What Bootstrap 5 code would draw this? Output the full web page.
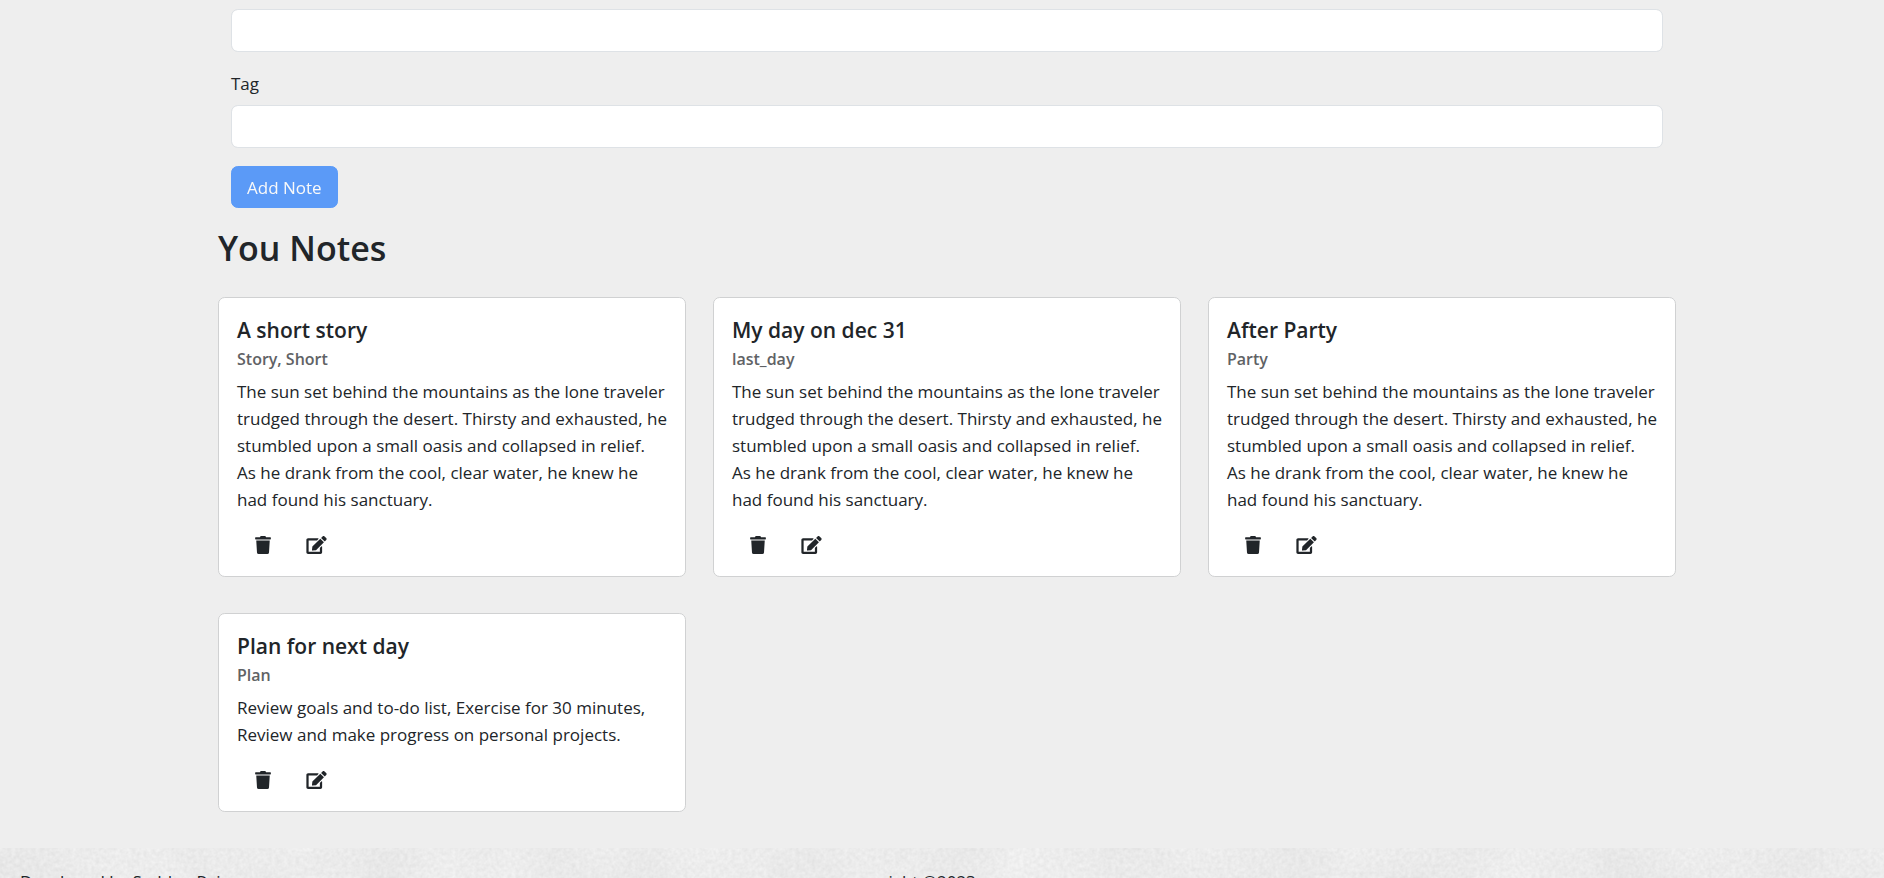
<!DOCTYPE html>
<html lang="en">
<head>
<meta charset="utf-8">
<meta name="viewport" content="width=device-width, initial-scale=1">
<title>Notes</title>
<link href="https://cdn.jsdelivr.net/npm/bootstrap@5.3.0/dist/css/bootstrap.min.css" rel="stylesheet">
<style>
  html { font-size: 18px; }
  body { font-family: "Open Sans", "Noto Sans", sans-serif; font-size: 17px; line-height: 27px; background: #eee; overflow-x: hidden; }
  .page-main { padding-left: 10px; }
  .page-width { max-width: 1485px; }
  .note-form { padding: 9px 13px 18px; }
  .form-control { height: 43px; }
  .form-label { margin-bottom: 8px; }
  .btn-add { height: 42px; font-size: 17px; line-height: 27px; padding: 6px 15px; }
  .notes-heading { font-size: 34px; line-height: 45px; font-weight: 600; margin-bottom: 8px; }
  .note-title { font-size: 21px; line-height: 28px; font-weight: 600; margin-bottom: 4px; }
  .note-tag { font-size: 16px; line-height: 22px; font-weight: 600; color: #5f6265; margin-bottom: 8px; }
  .note-card { border-color: #d0d1d2; }
  .note-actions { gap: 35px; padding-left: 18px; height: 27px; }
  .icon-btn { color: #212529; background: none; border: 0; padding: 0; line-height: 1; }
  .icon-btn svg { height: 18px; display: block; fill: currentColor; }
  .site-footer { background: #ebebeb; isolation: isolate; overflow: hidden; }
  .footer-paper { z-index: -1; }
  .footer-grid { display: grid; grid-template-columns: 1fr auto 1fr; padding: 20px 84px 20px 20px; }
</style>
</head>
<body>
<svg width="0" height="0" class="position-absolute" aria-hidden="true">
  <symbol id="i-trash" viewBox="0 0 448 512"><path d="M432 32H312l-9.4-18.7A24 24 0 0 0 281.1 0H166.800a23.720 23.720 0 0 0-21.400 13.300L136 32H16A16 16 0 0 0 0 48v32a16 16 0 0 0 16 16h416a16 16 0 0 0 16-16V48a16 16 0 0 0-16-16zM32 128l21.200 339a48 48 0 0 0 47.900 45h245.800a48 48 0 0 0 47.900-45L416 128z"/></symbol>
  <symbol id="i-edit" viewBox="0 0 576 512"><path d="M402.600 83.200l90.200 90.200c3.800 3.800 3.800 10 0 13.800L274.400 405.600l-92.800 10.300c-12.400 1.400-22.900-9.100-21.500-21.500l10.300-92.800L388.800 83.200c3.800-3.800 10-3.800 13.800 0zm162-22.900l-48.800-48.800c-15.200-15.200-39.900-15.200-55.200 0l-35.400 35.400c-3.800 3.800-3.800 10 0 13.800l90.200 90.200c3.800 3.800 10 3.800 13.800 0l35.400-35.400c15.200-15.300 15.200-40 0-55.200zM384 346.200V448H64V128h229.800c3.200 0 6.200-1.300 8.500-3.500l40-40c7.600-7.600 2.200-20.500-8.500-20.500H48C21.500 64 0 85.500 0 112v352c0 26.500 21.500 48 48 48h352c26.500 0 48-21.500 48-48V306.200c0-10.700-12.900-16-20.500-8.500l-40 40c-2.200 2.300-3.500 5.300-3.500 8.500z"/></symbol>
</svg>

<main class="page-main">
  <div class="container page-width">
    <form class="note-form">
      <div class="mb-3">
        <input type="text" class="form-control" id="description" aria-label="Description">
      </div>
      <div class="mb-3">
        <label for="tag" class="form-label d-block">Tag</label>
        <input type="text" class="form-control" id="tag">
      </div>
      <button type="submit" class="btn btn-primary btn-add" disabled>Add Note</button>
    </form>

    <h2 class="notes-heading">You Notes</h2>
    <div class="row align-items-start">
      <div class="col-md-4">
        <div class="card note-card my-3">
          <div class="card-body">
            <h5 class="note-title">A short story</h5>
            <h6 class="note-tag">Story, Short</h6>
            <p class="mb-3">The sun set behind the mountains as the lone traveler trudged through the desert. Thirsty and exhausted, he stumbled upon a small oasis and collapsed in relief. As he drank from the cool, clear water, he knew he had found his sanctuary.</p>
            <div class="note-actions d-flex align-items-center">
              <button type="button" class="icon-btn" aria-label="Delete note"><svg width="16"><use href="#i-trash"/></svg></button>
              <button type="button" class="icon-btn" aria-label="Edit note"><svg width="21"><use href="#i-edit"/></svg></button>
            </div>
          </div>
        </div>
      </div>
      <div class="col-md-4">
        <div class="card note-card my-3">
          <div class="card-body">
            <h5 class="note-title">My day on dec 31</h5>
            <h6 class="note-tag">last_day</h6>
            <p class="mb-3">The sun set behind the mountains as the lone traveler trudged through the desert. Thirsty and exhausted, he stumbled upon a small oasis and collapsed in relief. As he drank from the cool, clear water, he knew he had found his sanctuary.</p>
            <div class="note-actions d-flex align-items-center">
              <button type="button" class="icon-btn" aria-label="Delete note"><svg width="16"><use href="#i-trash"/></svg></button>
              <button type="button" class="icon-btn" aria-label="Edit note"><svg width="21"><use href="#i-edit"/></svg></button>
            </div>
          </div>
        </div>
      </div>
      <div class="col-md-4">
        <div class="card note-card my-3">
          <div class="card-body">
            <h5 class="note-title">After Party</h5>
            <h6 class="note-tag">Party</h6>
            <p class="mb-3">The sun set behind the mountains as the lone traveler trudged through the desert. Thirsty and exhausted, he stumbled upon a small oasis and collapsed in relief. As he drank from the cool, clear water, he knew he had found his sanctuary.</p>
            <div class="note-actions d-flex align-items-center">
              <button type="button" class="icon-btn" aria-label="Delete note"><svg width="16"><use href="#i-trash"/></svg></button>
              <button type="button" class="icon-btn" aria-label="Edit note"><svg width="21"><use href="#i-edit"/></svg></button>
            </div>
          </div>
        </div>
      </div>
      <div class="col-md-4">
        <div class="card note-card my-3">
          <div class="card-body">
            <h5 class="note-title">Plan for next day</h5>
            <h6 class="note-tag">Plan</h6>
            <p class="mb-3">Review goals and to-do list, Exercise for 30 minutes, Review and make progress on personal projects.</p>
            <div class="note-actions d-flex align-items-center">
              <button type="button" class="icon-btn" aria-label="Delete note"><svg width="16"><use href="#i-trash"/></svg></button>
              <button type="button" class="icon-btn" aria-label="Edit note"><svg width="21"><use href="#i-edit"/></svg></button>
            </div>
          </div>
        </div>
      </div>
    </div>
  </div>
</main>

<footer class="site-footer position-relative mt-3">
  <svg class="footer-paper position-absolute top-0 start-0 w-100 h-100" aria-hidden="true">
    <filter id="grain" x="0" y="0" width="100%" height="100%" color-interpolation-filters="sRGB">
      <feTurbulence type="fractalNoise" baseFrequency="0.25" numOctaves="3" seed="4" result="fine"/>
      <feColorMatrix in="fine" values="0.12 0 0 0 0.86  0.12 0 0 0 0.86  0.12 0 0 0 0.86  0 0 0 0 1" result="a"/>
      <feTurbulence type="fractalNoise" baseFrequency="0.012" numOctaves="3" seed="9"/>
      <feColorMatrix values="0.12 0 0 0 0.865  0.12 0 0 0 0.865  0.12 0 0 0 0.865  0 0 0 0 1" result="b"/>
      <feComposite in="a" in2="b" operator="arithmetic" k2="0.6" k3="0.4"/>
    </filter>
    <rect width="100%" height="100%" filter="url(#grain)"/>
  </svg>
  <div class="footer-grid">
    <span>Developed by Saddan Raj</span>
    <span>copyright ©2023</span>
  </div>
</footer>
<script src="https://cdn.jsdelivr.net/npm/bootstrap@5.3.0/dist/js/bootstrap.bundle.min.js"></script>
</body>
</html>
